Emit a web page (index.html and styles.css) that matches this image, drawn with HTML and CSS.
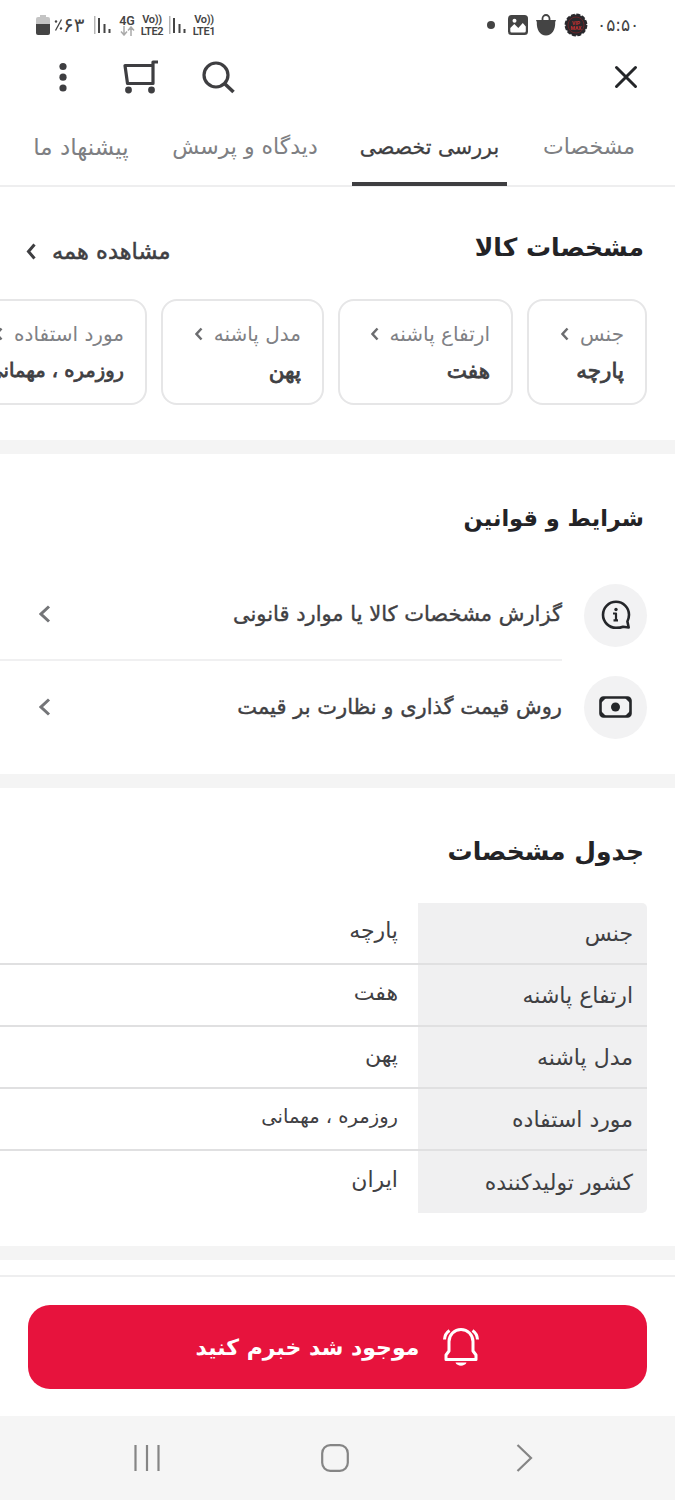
FILE: index.html
```html
<!DOCTYPE html>
<html lang="fa" dir="rtl">
<head>
    <meta charset="UTF-8">
    <meta name="viewport" content="width=device-width, initial-scale=1.0">
    <title>مشخصات کالا</title>
    <link rel="stylesheet" href="styles.css">
</head>
<body>
    <!-- Status bar -->
    <div class="status-bar" dir="ltr">
        <svg class="battery" width="14" height="20" viewBox="0 0 14 20">
            <path d="M4 0h6v2h2a2 2 0 0 1 2 2v6H0V4a2 2 0 0 1 2-2h2z" fill="#c4c4c4"/>
            <path d="M0 9h14v9a2 2 0 0 1-2 2H2a2 2 0 0 1-2-2z" fill="#444"/>
        </svg>
        <span class="percent"><svg width="9" height="14" viewBox="0 0 9 14"><path d="M1.5 12.500 7.500 1.500" stroke="#444" stroke-width="1.300"/><circle cx="2" cy="3.500" r="1.200" fill="#444"/><circle cx="7" cy="10.500" r="1.200" fill="#444"/></svg><bdo dir="ltr">۶۳</bdo></span>
        <svg class="signal" width="17" height="18" viewBox="0 0 17 18" fill="#444">
            <path d="M0 0h1.500v18H0z" fill="#b5b5b5"/><path d="M4 2h2v15H4zM9.500 8h2v9h-2zM14.500 13h2v4h-2z"/>
        </svg>
        <div class="network">
            <b>4G</b>
            <svg width="15" height="10" viewBox="0 0 15 10" fill="none" stroke="#aaa" stroke-width="1.500"><path d="M4 0v9M1 5.500l3 3.500 3-3.500M11 10V1M8 4.500l3-3.500 3 3.500"/></svg>
        </div>
        <div class="network lte"><b>Vo))</b><b>LTE2</b></div>
        <svg class="signal second" width="17" height="18" viewBox="0 0 17 18" fill="#444">
            <path d="M0 0h1.500v18H0z" fill="#b5b5b5"/><path d="M4 2h2v15H4zM9.500 8h2v9h-2zM14.500 13h2v4h-2z"/>
        </svg>
        <div class="network lte"><b>Vo))</b><b>LTE1</b></div>
        <div class="notifications">
            <span class="dot"></span>
            <svg width="20" height="20" viewBox="0 0 20 20">
                <rect width="20" height="20" rx="3.500" fill="#444"/>
                <path d="M2.300 16V13l4-4 4 4 4.500-5 3 3.500V16a1.500 1.500 0 0 1-1.500 1.500H4A1.500 1.500 0 0 1 2.300 16z" fill="#fff"/>
                <circle cx="6.500" cy="5.800" r="2" fill="#fff"/>
            </svg>
            <svg width="22" height="22" viewBox="0 0 22 22">
                <path d="M7.500 7V4.500a3.500 3.500 0 0 1 7 0V7" fill="none" stroke="#444" stroke-width="1.800"/>
                <path d="M1 6h20l-.8 2C20.500 16 17 21.500 11 21.500S1.500 16 1.800 8z" fill="#444"/>
            </svg>
            <svg width="24" height="24" viewBox="0 0 24 24">
                <circle cx="12" cy="12" r="10.500" fill="#29282c"/>
                <circle cx="12" cy="12" r="10.500" fill="none" stroke="#29282c" stroke-width="1.800" stroke-dasharray="4 1.500"/>
                <circle cx="12" cy="12" r="8" fill="none" stroke="#672528"/>
                <text x="12" y="11.500" class="seal">VIP</text>
                <text x="12" y="17" class="seal">MAX</text>
            </svg>
        </div>
        <span class="clock"><bdo dir="ltr">۰۵:۵۰</bdo></span>
    </div>

    <!-- App bar -->
    <div class="app-bar">
        <svg class="close" width="24" height="24" viewBox="0 0 24 24" fill="none" stroke="#242629" stroke-width="3" stroke-linecap="round"><path d="M2.500 2.500l19 19M21.500 2.500l-19 19"/></svg>
        <div class="actions">
            <svg width="33" height="33" viewBox="0 0 33 33" fill="none" stroke="#3e3e41" stroke-width="3.200"><circle cx="14" cy="14" r="12"/><path d="M22.500 22.500l9 8.500" stroke-width="3.600"/></svg>
            <svg width="35" height="34" viewBox="0 0 35 34" fill="none" stroke="#3e3e41" stroke-width="3.200"><path d="M30 5.500H2L4.500 23.500H30V2H35" stroke-linejoin="round"/><g fill="#3e3e41" stroke="none"><circle cx="5.500" cy="30" r="3.400"/><circle cx="28.500" cy="30" r="3.400"/></g></svg>
            <svg width="8" height="30" viewBox="0 0 8 30" fill="#3e3e41"><circle cx="4" cy="4.500" r="3.600"/><circle cx="4" cy="15.200" r="3.600"/><circle cx="4" cy="26" r="3.600"/></svg>
        </div>
    </div>

    <!-- Tabs -->
    <nav class="tabs">
        <a class="tab tab-specs"><span>مشخصات</span></a>
        <a class="tab tab-review active"><span>بررسی تخصصی</span></a>
        <a class="tab tab-comments"><span>دیدگاه و پرسش</span></a>
        <a class="tab tab-offers"><span>پیشنهاد ما</span></a>
    </nav>

    <!-- Highlights -->
    <section class="highlights">
        <div class="section-header">
            <h2>مشخصات کالا</h2>
            <a class="see-all">مشاهده همه
                <svg width="10" height="17" viewBox="0 0 10 17"><path d="M8.500 1.500l-6 7 6 7"/></svg>
            </a>
        </div>
        <div class="cards">
            <div class="card card-1">
                <div class="card-label">جنس <svg width="8" height="14" viewBox="0 0 8 14"><path d="M6.500 1.500l-5 5.500 5 5.500"/></svg></div>
                <div class="card-value">پارچه</div>
            </div>
            <div class="card card-2">
                <div class="card-label">ارتفاع پاشنه <svg width="8" height="14" viewBox="0 0 8 14"><path d="M6.500 1.500l-5 5.500 5 5.500"/></svg></div>
                <div class="card-value">هفت</div>
            </div>
            <div class="card card-3">
                <div class="card-label">مدل پاشنه <svg width="8" height="14" viewBox="0 0 8 14"><path d="M6.500 1.500l-5 5.500 5 5.500"/></svg></div>
                <div class="card-value">پهن</div>
            </div>
            <div class="card card-4">
                <div class="card-label">مورد استفاده <svg width="8" height="14" viewBox="0 0 8 14"><path d="M6.500 1.500l-5 5.500 5 5.500"/></svg></div>
                <div class="card-value">روزمره ، مهمانی</div>
            </div>
        </div>
    </section>

    <!-- Terms -->
    <section class="terms">
        <h2>شرایط و قوانین</h2>
        <a class="term">
            <span class="term-icon">
                <svg width="30" height="30" viewBox="0 0 30 30" fill="none" stroke="#242629" stroke-width="2.600" stroke-linejoin="round"><path d="M15 27.800A13 13 0 1 1 28 14.800c0 2.800-.6 4.600-1.600 6.700l1.300 6-5.600-.8c-2 .9-4.300 1.100-7.100 1.100z"/><path d="M12 13.500h3v7M12.500 20.300h4.500" stroke-width="2.200"/><circle cx="15" cy="9.500" r="1.700" fill="#242629" stroke="none"/></svg>
            </span>
            <span class="term-body">
                <span>گزارش مشخصات کالا یا موارد قانونی</span>
                <svg width="12" height="18" viewBox="0 0 12 18"><path d="M10 1.500L2 9l8 7.500"/></svg>
            </span>
        </a>
        <a class="term">
            <span class="term-icon">
                <svg width="33" height="22" viewBox="0 0 33 22"><rect x="1.500" y="1.500" width="30" height="19" rx="3" fill="none" stroke="#242629" stroke-width="2.600"/><path d="M2 2h5L2 7zM31 2h-5l5 5zM2 20h5l-5-5zM31 20h-5l5-5z" fill="#242629"/><circle cx="16.500" cy="11" r="4.500" fill="#242629"/></svg>
            </span>
            <span class="term-body">
                <span>روش قیمت گذاری و نظارت بر قیمت</span>
                <svg width="12" height="18" viewBox="0 0 12 18"><path d="M10 1.500L2 9l8 7.500"/></svg>
            </span>
        </a>
    </section>

    <!-- Specs table -->
    <section class="specs">
        <h2>جدول مشخصات</h2>
        <table>
            <tr><th>جنس</th><td>پارچه</td></tr>
            <tr><th>ارتفاع پاشنه</th><td>هفت</td></tr>
            <tr><th>مدل پاشنه</th><td>پهن</td></tr>
            <tr><th>مورد استفاده</th><td class="long">روزمره ، مهمانی</td></tr>
            <tr><th>کشور تولیدکننده</th><td>ایران</td></tr>
        </table>
    </section>

    <!-- Notify button -->
    <div class="buy-bar">
        <button class="notify-btn">
            <svg width="36" height="38" viewBox="0 0 36 38" fill="none" stroke="#fff" stroke-width="3" stroke-linejoin="round"><path d="M3 31.500v-4.500l3-4V13.500a12 12 0 0 1 24 0V23l3 4v4.500z"/><path d="M6.500 2.500C3.500 4.500 1.800 7 1.500 11.500M29.500 2.500c3 2 4.700 4.500 5 9"/><path d="M12.500 34.500h11c-1.500 4.200-9.500 4.200-11 0z" fill="#fff" stroke="none"/></svg>
            <span>موجود شد خبرم کنید</span>
        </button>
    </div>

    <!-- Android navigation -->
    <div class="nav-bar" dir="ltr">
        <svg width="26" height="28" viewBox="0 0 26 28"><path d="M1.500 1v26M13 1v26M24.500 1v26"/></svg>
        <svg class="home" width="28" height="28" viewBox="0 0 28 28"><rect x="1.200" y="1.200" width="25.600" height="25.600" rx="8"/></svg>
        <svg width="17" height="28" viewBox="0 0 17 28"><path d="M1.500 1l13.500 13L1.500 27"/></svg>
    </div>
</body>
</html>
```
FILE: styles.css
```css
* {
    box-sizing: border-box;
}
body {
    margin: 0;
    width: 675px;
    height: 1500px;
    overflow: hidden;
    background: #fff;
    color: #3f4043;
    font-family: "DejaVu Sans", sans-serif;
    display: flex;
    flex-direction: column;
}
svg {
    display: block;
    flex: none;
}
h2 {
    margin: 0;
    font-size: 25px;
    line-height: 40px;
    font-weight: bold;
    color: #232326;
    white-space: nowrap;
}

/* Status bar */
.status-bar {
    height: 48px;
    padding: 2px 37px 0 36px;
    display: flex;
    align-items: center;
    color: #444;
}
.percent {
    display: flex;
    align-items: center;
    margin: 0 9px 0 4px;
    width: 31px;
    font-size: 20px;
}
.signal {
    margin-right: 8px;
}
.second {
    margin: 0 6px 0 5px;
}
.network {
    width: 16px;
    margin-right: 5px;
    display: flex;
    flex-direction: column;
    align-items: center;
    font-family: Roboto, sans-serif;
    font-size: 12.500px;
    line-height: 11px;
}
.network b {
    font-weight: 600;
}
.lte {
    width: 24px;
    margin-right: 0;
    font-size: 11px;
    line-height: 13px;
    letter-spacing: -0.3px;
}
.lte b:last-child {
    margin-top: -1px;
}
.notifications {
    display: flex;
    align-items: center;
    gap: 7px;
    margin-left: auto;
}
.dot {
    width: 8px;
    height: 8px;
    border-radius: 50%;
    background: #444;
    margin-right: 6px;
}
.seal {
    font: bold 5px Roboto, sans-serif;
    fill: #c53131;
    text-anchor: middle;
}
.clock {
    width: 41px;
    margin-left: 9px;
    font-size: 17px;
    white-space: nowrap;
}

/* App bar */
.app-bar {
    height: 58px;
    padding: 0 37px 0 59px;
    display: flex;
    justify-content: space-between;
    align-items: center;
}
.actions {
    display: flex;
    align-items: center;
    gap: 44px;
}
.actions svg:last-child {
    margin-right: 12px;
}

/* Tabs */
.tabs {
    height: 81px;
    padding: 0 33px 0 22px;
    display: flex;
    border-bottom: 2px solid #eeeeef;
}
.tab {
    height: 80px;
    padding-top: 26px;
    font-size: 22px;
    line-height: 30px;
    color: #7e7f83;
    white-space: nowrap;
    text-align: center;
}
.tab-specs {
    width: 108px;
    margin-right: -1px;
}
.tab-review {
    width: 155px;
    margin: 0 28px;
    font-size: 20.500px;
    -webkit-text-stroke: 0.3px #3e3e41;
}
.tab-comments {
    width: 158px;
}
.tab-offers {
    width: 110px;
    margin-right: 30px;
    font-size: 23px;
}
.active {
    color: #3e3e41;
    border-bottom: 4px solid #3e3e41;
    border-radius: 3px 3px 0 0;
}

/* Highlights */
.highlights {
    height: 267px;
    padding-top: 41px;
    border-bottom: 14px solid #f4f4f4;
}
.section-header {
    height: 71px;
    padding: 0 31px 0 26px;
    display: flex;
    justify-content: space-between;
}
.see-all {
    display: flex;
    align-items: center;
    height: 46px;
    gap: 16px;
    font-size: 22.500px;
    -webkit-text-stroke: 0.5px #3f4043;
    white-space: nowrap;
}
.see-all svg {
    fill: none;
    stroke: #3e3e41;
    stroke-width: 3;
}
.cards {
    display: flex;
    gap: 14px;
    padding-right: 28px;
    overflow: hidden;
}
.card {
    flex: none;
    height: 106px;
    padding: 18px 21px 0;
    border: 2px solid #e6e6e7;
    border-radius: 16px;
    white-space: nowrap;
}
.card-1 {
    width: 120px;
}
.card-2 {
    width: 175px;
}
.card-3 {
    width: 163px;
}
.card-4 {
    width: 190px;
}
.card-label {
    display: flex;
    align-items: center;
    gap: 11px;
    font-size: 20px;
    line-height: 30px;
    color: #808185;
}
.card-label svg {
    fill: none;
    stroke: #6c6d70;
    stroke-width: 2.500;
}
.card-value {
    font-size: 21.500px;
    line-height: 30px;
    margin-top: 7px;
    -webkit-text-stroke: 0.8px #3f4043;
}
.card-4 .card-value {
    font-size: 19.500px;
}

/* Terms */
.terms {
    height: 334px;
    padding: 44px 28px 0 0;
    border-bottom: 14px solid #f4f4f4;
}
.terms h2,
.specs h2 {
    padding-right: 3px;
}
.terms h2 {
    margin-bottom: 31px;
    font-size: 22.500px;
}
.term {
    display: flex;
    align-items: center;
    height: 92px;
}
.term-icon {
    width: 63px;
    height: 63px;
    flex: none;
    display: flex;
    align-items: center;
    justify-content: center;
    border-radius: 50%;
    background: #f2f2f3;
}
.term-body {
    flex: 1;
    height: 92px;
    margin-right: 22px;
    padding-left: 39px;
    display: flex;
    align-items: center;
    justify-content: space-between;
    font-size: 21px;
    -webkit-text-stroke: 0.4px #3f4043;
    white-space: nowrap;
}
.term:nth-of-type(1) .term-body {
    border-bottom: 2px solid #f0f0f1;
}
.term-body svg {
    fill: none;
    stroke: #747578;
    stroke-width: 3;
}

/* Specs table */
.specs {
    height: 472px;
    padding: 44px 28px 0 0;
    border-bottom: 14px solid #f4f4f4;
}
table {
    width: 647px;
    margin-top: 31px;
    border-collapse: separate;
    border-spacing: 0;
}
th,
td {
    height: 62px;
    padding: 2px 14px 0 0;
    text-align: right;
    font-size: 22px;
    line-height: 30px;
    font-weight: normal;
    white-space: nowrap;
    border-bottom: 2px solid #e0e0e1;
}
th {
    width: 229px;
    background: #f0f0f1;
}
td {
    padding: 0 20px 4px 0;
}
.long {
    font-size: 19.500px;
}
tr:first-child th {
    border-top-right-radius: 5px;
}
tr:last-child th {
    border-bottom-right-radius: 5px;
}
tr:last-child th,
tr:last-child td {
    border-bottom: none;
}

/* Notify button */
.buy-bar {
    height: 141px;
    margin-top: 15px;
    padding: 28px 28px 0;
    border-top: 2px solid #eeeeef;
}
.notify-btn {
    width: 619px;
    height: 84px;
    display: flex;
    align-items: center;
    justify-content: center;
    gap: 24px;
    border: none;
    border-radius: 22px;
    background: #e7133d;
    color: #fff;
    font-family: inherit;
    font-size: 22px;
    font-weight: bold;
    white-space: nowrap;
}

/* Android navigation */
.nav-bar {
    height: 84px;
    padding: 0 142px 0 134px;
    display: flex;
    align-items: center;
    justify-content: space-between;
    background: #f5f5f5;
}
.nav-bar svg {
    fill: none;
    stroke: #858585;
    stroke-width: 2.200;
}
.nav-bar .home {
    margin-right: 6px;
}
```
